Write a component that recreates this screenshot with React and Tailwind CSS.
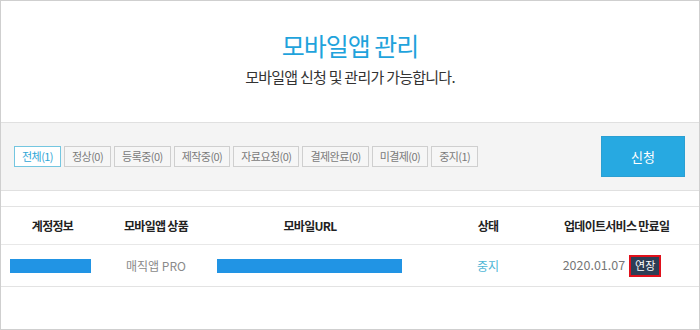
import React from 'react';

const filters = [
  { label: '전체(1)', active: true },
  { label: '정상(0)' },
  { label: '등록중(0)' },
  { label: '제작중(0)' },
  { label: '자료요청(0)' },
  { label: '결제완료(0)' },
  { label: '미결제(0)' },
  { label: '중지(1)' },
];

const App = () => {
  return (
    <div
      className="w-[700px] h-[330px] border border-[#cfcfcf] bg-white flex flex-col overflow-hidden"
      style={{ fontFamily: '"Noto Sans CJK KR", "Noto Sans", sans-serif' }}
    >
      {/* Title */}
      <div className="h-[121px] flex flex-col items-center pt-[29px]">
        <h1 className="text-[25px] leading-[30px] text-[#1fa3dc] tracking-[-0.04em]">모바일앱 관리</h1>
        <p className="mt-[7px] text-[15px] leading-[20px] text-[#333] tracking-[-0.05em]">
          모바일앱 신청 및 관리가 가능합니다.
        </p>
      </div>

      {/* Filter bar */}
      <div className="h-[69px] bg-[#f4f4f4] border-y border-[#e0e0e0] flex items-center justify-between pl-[13px] pr-[14px]">
        <div className="flex gap-[3px]">
          {filters.map((f) => (
            <button
              key={f.label}
              className={`h-[21px] px-[7px] text-[11px] leading-none border tracking-[-0.05em] ${
                f.active
                  ? 'border-[#74c6e0] bg-white text-[#2fa6d6]'
                  : 'border-[#cfcfcf] bg-[#f6f6f6] text-[#7a7a7a]'
              }`}
            >
              {f.label}
            </button>
          ))}
        </div>
        <button className="w-[84px] h-[41px] bg-[#27a9e1] border border-[#2b9fd2] text-white text-[13px]">
          신청
        </button>
      </div>

      {/* Table */}
      <div className="mt-[15px] border-t border-[#e3e3e3]">
        <div className="h-[38px] flex items-center text-[12px] font-bold text-[#222] tracking-[-0.06em] border-b border-[#e8e8e8]">
          <div className="w-[103px] text-center">계정정보</div>
          <div className="w-[104px] text-center">모바일앱 상품</div>
          <div className="w-[204px] text-center">모바일URL</div>
          <div className="w-[152px] text-center">상태</div>
          <div className="w-[96px] text-center whitespace-nowrap">업데이트서비스 만료일</div>
        </div>
        <div className="h-[42px] flex items-center text-[12px] border-b border-[#e3e3e3]">
          <div className="w-[103px] pl-[9px]">
            <div className="w-[81px] h-[14px] bg-[#2194e4]" />
          </div>
          <div className="w-[104px] text-center text-[#8a8a8a]">매직앱 PRO</div>
          <div className="w-[204px] pl-[9px]">
            <div className="w-[185px] h-[14px] bg-[#2194e4]" />
          </div>
          <div className="w-[152px] text-center text-[#4fb6d6]">중지</div>
          <div className="w-[96px] flex items-center justify-center gap-[4px] whitespace-nowrap">
            <span className="text-[#777] text-[12.5px]">2020.01.07</span>
            <span className="h-[22px] px-[4px] flex items-center bg-[#2d3e55] border-2 border-[#e0101b] text-white text-[11px]">
              연장
            </span>
          </div>
        </div>
      </div>
    </div>
  );
};

export default App;
